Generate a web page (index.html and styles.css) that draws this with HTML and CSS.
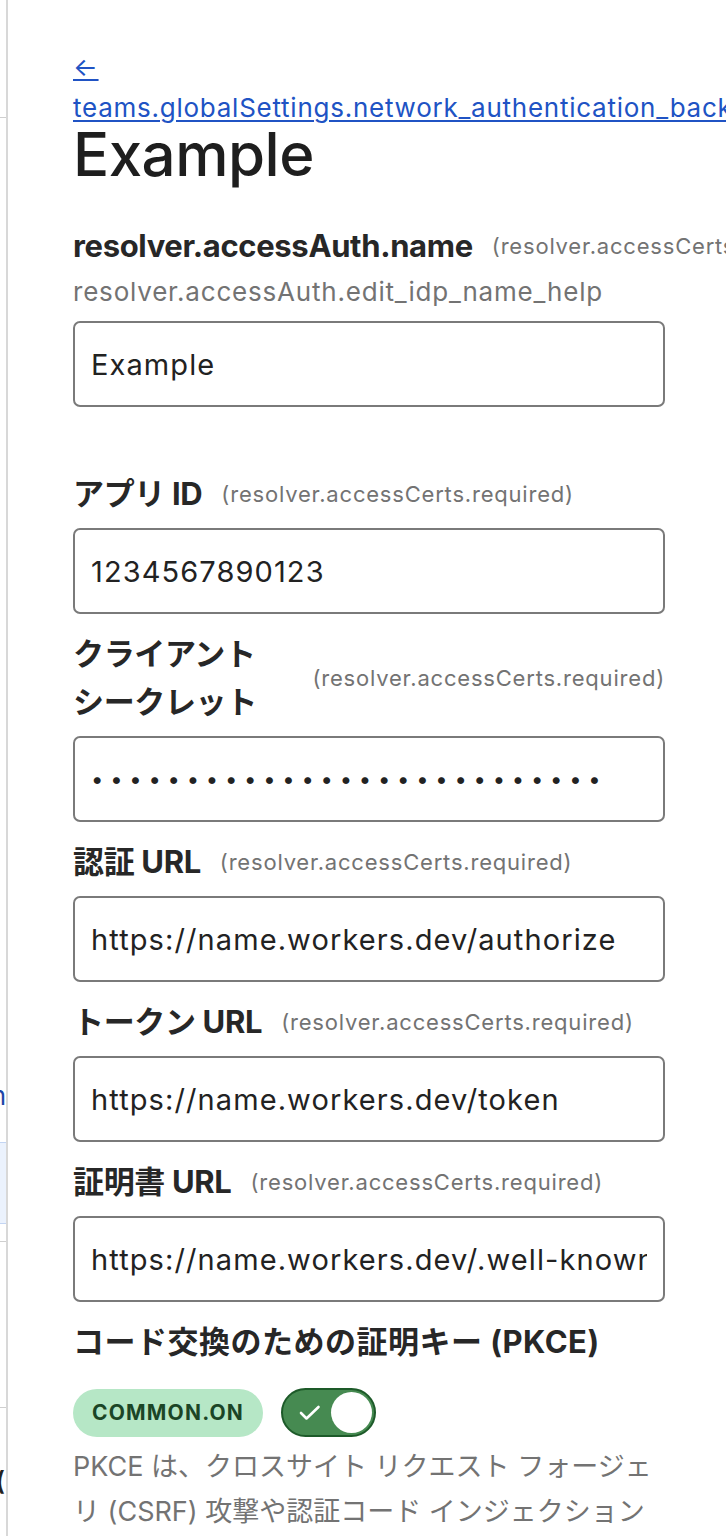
FILE: index.html
```html
<!DOCTYPE html>
<html lang="ja">
<head>
<meta charset="utf-8">
<title>Example</title>
<link rel="stylesheet" href="styles.css">
</head>
<body>
<div class="page">
  <div class="backdrop">
    <div class="bd-gap bd-gap-1"></div>
    <div class="bd-line"></div>
    <div class="bd-gap bd-gap-2"></div>
    <div class="bd-text bd-link">n</div>
    <div class="bd-gap bd-gap-3"></div>
    <div class="bd-row"></div>
    <div class="bd-gap bd-gap-4"></div>
    <div class="bd-line"></div>
    <div class="bd-gap bd-gap-5"></div>
    <div class="bd-line"></div>
    <div class="bd-gap bd-gap-6"></div>
    <div class="bd-text bd-dark">(</div>
  </div>

  <aside class="drawer">
    <a class="back" href="#">← teams.globalSettings.network_authentication_back_link</a>
    <h1 class="title">Example</h1>

    <div class="fields">
      <div class="field field-first">
        <div class="label-row">
          <label class="label" for="f-name">resolver.accessAuth.name</label>
          <span class="req">(resolver.accessCerts.required)</span>
        </div>
        <p class="help">resolver.accessAuth.edit_idp_name_help</p>
        <input class="input" id="f-name" type="text" value="Example">
      </div>

      <div class="field">
        <div class="label-row">
          <label class="label" for="f-app">アプリ ID</label>
          <span class="req">(resolver.accessCerts.required)</span>
        </div>
        <input class="input" id="f-app" type="text" value="1234567890123">
      </div>

      <div class="field">
        <div class="label-row">
          <label class="label" for="f-secret">クライアント シークレット</label>
          <span class="req">(resolver.accessCerts.required)</span>
        </div>
        <input class="input input-secret" id="f-secret" type="password" value="abcdefghijklmnopqrstuvwxyz1">
      </div>

      <div class="field">
        <div class="label-row">
          <label class="label" for="f-auth">認証 URL</label>
          <span class="req">(resolver.accessCerts.required)</span>
        </div>
        <input class="input" id="f-auth" type="text" value="https://name.workers.dev/authorize">
      </div>

      <div class="field">
        <div class="label-row">
          <label class="label" for="f-token">トークン URL</label>
          <span class="req">(resolver.accessCerts.required)</span>
        </div>
        <input class="input" id="f-token" type="text" value="https://name.workers.dev/token">
      </div>

      <div class="field">
        <div class="label-row">
          <label class="label" for="f-certs">証明書 URL</label>
          <span class="req">(resolver.accessCerts.required)</span>
        </div>
        <input class="input" id="f-certs" type="text" value="https://name.workers.dev/.well-known/jwks.json">
      </div>

      <div class="pkce">
        <div class="pkce-title">コード交換のための証明キー (PKCE)</div>
        <div class="toggle-row">
          <span class="badge">COMMON.ON</span>
          <span class="switch" role="switch" aria-checked="true">
            <svg class="check" width="22" height="16" viewBox="0 0 22 16"><polyline points="2,8 7.5,13.5 19.5,2" fill="none" stroke="#ffffff" stroke-width="2.6" stroke-linecap="round" stroke-linejoin="round"/></svg>
            <span class="knob"></span>
          </span>
        </div>
        <p class="desc">PKCE は、クロスサイト リクエスト フォージェリ (CSRF) 攻撃や認証コード インジェクション攻撃を防ぐために使用される拡張機能です。</p>
      </div>
    </div>
  </aside>
</div>
</body>
</html>
```
FILE: styles.css
```css
html, body {
  margin: 0;
  padding: 0;
  background: #ffffff;
}

body {
  font-family: Inter, "Noto Sans CJK JP", sans-serif;
  color: #222222;
  overflow: hidden;
}

.page {
  display: flex;
  width: 726px;
  height: 1536px;
  overflow: hidden;
}

/* background page peeking out at the left */
.backdrop {
  width: 6px;
  flex: 0 0 6px;
  display: flex;
  flex-direction: column;
  overflow: hidden;
}

.bd-gap-1 { height: 117px; }
.bd-gap-2 { height: 963px; }
.bd-gap-3 { height: 31px; }
.bd-gap-4 { height: 17px; }
.bd-gap-5 { height: 165px; }
.bd-gap-6 { height: 58px; }

.bd-line {
  height: 1px;
  background: #cfcfcf;
}

.bd-text {
  display: flex;
  justify-content: flex-end;
  height: 30px;
  font-size: 26px;
  line-height: 30px;
  white-space: nowrap;
}

.bd-link { color: #1d46a8; }
.bd-dark { color: #222222; font-weight: 600; margin-right: 1px; }

.bd-row {
  height: 80px;
  background: #ebf2fd;
  border-top: 1px solid #c3d5f3;
  border-bottom: 1px solid #c3d5f3;
}

/* drawer */
.drawer {
  flex: 1 1 auto;
  min-width: 0;
  border-left: 2px solid #d8d8d8;
  padding: 46px 0 0 65px;
  box-sizing: border-box;
}

.back {
  display: block;
  width: 592px;
  font-size: 26px;
  letter-spacing: 0.75px;
  line-height: 41px;
  color: #2053c4;
  text-decoration: underline;
  text-underline-offset: 3px;
  text-decoration-thickness: 2px;
}

.title {
  margin: 0;
  font-size: 60px;
  line-height: 52px;
  font-weight: 500;
  color: #1e1e1e;
  letter-spacing: -0.5px;
}

.fields {
  display: flex;
  flex-direction: column;
  gap: 16px;
  width: 592px;
  margin-top: 42px;
}

.field {
  display: flex;
  flex-direction: column;
}

.field-first {
  margin-bottom: 47px;
}

.label-row {
  display: flex;
  align-items: center;
  gap: 19px;
  margin-bottom: 10px;
}

.field-first .label-row {
  margin-bottom: 4px;
}

.label {
  font-size: 31px;
  letter-spacing: -0.35px;
  line-height: 48px;
  font-weight: 700;
  color: #272727;
  word-break: keep-all;
}

.req {
  flex: 0 0 auto;
  white-space: nowrap;
  font-size: 22px;
  letter-spacing: 0.8px;
  line-height: 30px;
  color: #737373;
}

.help {
  margin: 0 0 11px;
  font-size: 26px;
  letter-spacing: 0.8px;
  line-height: 36px;
  color: #737373;
}

.input {
  box-sizing: border-box;
  width: 592px;
  height: 86px;
  margin: 0;
  padding: 0 16px;
  border: 2px solid #7a7a7a;
  border-radius: 7px;
  background: #ffffff;
  font-family: Inter, "Noto Sans CJK JP", sans-serif;
  font-size: 29px;
  letter-spacing: 1.1px;
  color: #222222;
  outline: none;
}

.input-secret {
  font-size: 22px;
  letter-spacing: 6.75px;
}

.pkce {
  display: flex;
  flex-direction: column;
}

.pkce-title {
  font-size: 31px;
  letter-spacing: 0.5px;
  line-height: 48px;
  font-weight: 700;
  color: #272727;
}

.toggle-row {
  display: flex;
  align-items: center;
  gap: 18px;
  margin-top: 22px;
}

.badge {
  display: inline-flex;
  align-items: center;
  justify-content: center;
  width: 190px;
  height: 48px;
  border-radius: 24px;
  background: #b6e7c6;
  color: #1b4526;
  font-size: 21px;
  font-weight: 700;
  letter-spacing: 1.2px;
}

.switch {
  box-sizing: border-box;
  display: flex;
  align-items: center;
  justify-content: space-between;
  width: 95px;
  height: 49px;
  padding: 0 2px 0 16px;
  border: 2px solid #1d5a29;
  border-radius: 25px;
  background: #468a51;
}

.check {
  display: block;
}

.knob {
  width: 41px;
  height: 41px;
  border-radius: 50%;
  background: #ffffff;
}

.desc {
  margin: 7px 0 0;
  font-size: 27px;
  line-height: 45px;
  color: #737373;
}
```
